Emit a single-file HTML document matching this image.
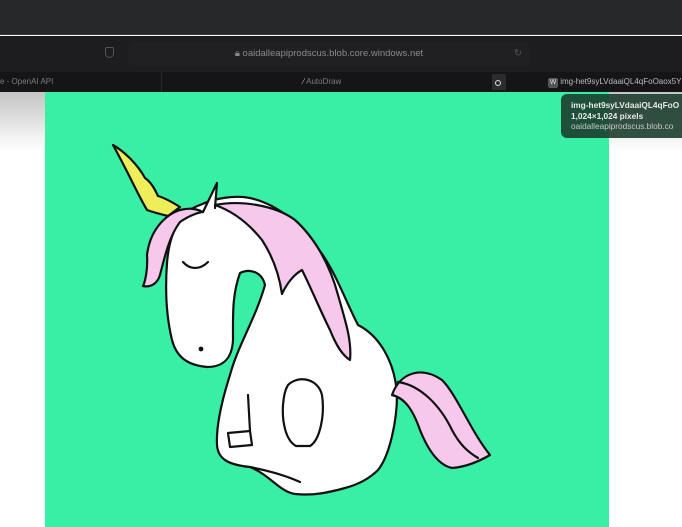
<!DOCTYPE html>
<html><head><style>
*{margin:0;padding:0;box-sizing:border-box}
body{width:682px;height:527px;overflow:hidden;background:#fff;font-family:"Liberation Sans",sans-serif;position:relative}
.top{position:absolute;left:0;top:0;width:682px;height:35px;background:#27282a;border-bottom:1px solid #3b3b3d}
.addr{position:absolute;left:0;top:36px;width:682px;height:36px;background:#1d1d1f}
.url{position:absolute;left:128px;top:42px;width:402px;height:24px;border-radius:6px;background:#202022;color:#8a8a8c;font-size:9.5px;text-align:center;line-height:24px}
.tabs{position:absolute;left:0;top:72px;width:682px;height:20px;background:#151517;font-size:8px;color:#7d7d80}
.tab{position:absolute;top:0;height:20px;line-height:20px}
.shade{position:absolute;left:0;top:92px;width:682px;height:435px;background:linear-gradient(#c4c4c4,#f2f2f2 45px,#fff 60px)}
.img{position:absolute;left:45px;top:92px;width:564px;height:435px;background:#39efa6}
.tip{position:absolute;left:561px;top:94px;width:130px;height:44px;border-radius:6px;background:rgba(28,62,46,.9);color:#e8e8e8;font-size:8.3px;line-height:10.5px;padding:6px 0 0 10px;white-space:nowrap;overflow:hidden}
</style></head><body>
<div class="top"></div>
<div class="addr"><div style="position:absolute;left:105px;top:11px;width:9px;height:11px;border:1.5px solid #555;border-radius:2px 2px 5px 5px"></div></div>
<div class="url">🔒︎ oaidalleapiprodscus.blob.core.windows.net<span style="position:absolute;right:8px;color:#555">↻</span></div>
<div class="tabs">
<div class="tab" style="left:0">e - OpenAI API</div>
<div style="position:absolute;left:161px;top:0;width:1px;height:20px;background:#2a2a2c"></div>
<div class="tab" style="left:303px"><span style="color:#c9a">⁄</span> AutoDraw</div>
<div style="position:absolute;left:492px;top:2px;width:14px;height:16px;background:#2c2c2e"></div>
<div style="position:absolute;left:495px;top:8px;width:6px;height:6px;border:1.5px solid #ddd;border-radius:50%"></div>
<div class="tab" style="left:548px;color:#bbb"><span style="display:inline-block;width:10px;height:10px;background:#555;border-radius:2px;font-size:7px;line-height:10px;text-align:center;color:#ddd">W</span> img-het9syLVdaaiQL4qFoOaox5Y</div>
</div>
<div class="shade"></div>
<div class="img">
<svg width="564" height="435" viewBox="45 92 564 435" style="position:absolute;left:0;top:0" fill="none" stroke="#111" stroke-width="2.2" stroke-linejoin="round" stroke-linecap="round">
<path d="M113,145 C125,152 138,165 145,178 C152,183 155,190 158,196 C165,198 172,202 180,207 L168,216 C160,214 152,212 147,210 C138,195 128,172 113,145Z" fill="#eeee5a"/>
<path d="M200,205 C185,210 170,225 167,263 C165,290 166,315 172,340 C176,355 185,365 207,367 C222,367 232,360 233,340 C233,315 232,295 240,273 C250,268 262,272 265,285 C255,320 238,345 230,375 C222,400 216,425 217,445 C218,460 230,465 250,467 C270,475 280,492 295,494 C315,496 330,492 345,488 C360,484 370,478 378,470 C390,455 397,420 397,395 C395,360 378,335 358,325 C345,300 335,270 317,247 C300,225 280,205 250,198 C235,195 215,198 200,205Z" fill="#fff"/>
<path d="M203,212 L217,183 L215,208" fill="#fff"/>
<path d="M180,210 C165,215 150,230 147,255 C148,270 145,282 143,286 C152,288 158,282 160,275 C165,255 170,235 180,222 C190,215 200,212 203,212 C195,208 188,208 180,210Z" fill="#f6c9ec"/>
<path d="M215,205 C240,200 275,205 295,220 C315,238 330,265 338,295 C345,320 352,340 350,360 C342,355 336,345 330,330 C320,310 312,290 302,270 C293,275 286,285 282,294 C280,280 275,260 262,240 C250,225 235,212 215,205Z" fill="#f6c9ec"/>
<path d="M392,395 C400,372 422,366 442,380 C457,395 470,430 490,455 C478,462 465,467 452,468 C438,465 428,450 420,430 C413,410 405,398 392,395Z" fill="#f6c9ec"/>
<path d="M398,382 C420,385 440,405 452,430 C460,445 468,452 478,458"/>
<path d="M183,262 C190,270 200,270 208,262"/>
<circle cx="201" cy="349" r="1.3" fill="#111"/>
<path d="M288,385 C298,375 318,378 322,395 C325,415 320,440 310,446 L296,446 C285,440 282,420 283,405 C284,395 285,390 288,385Z"/>
<path d="M228,433 L250,431 L252,445 L230,447Z"/>
<path d="M248,395 L250,431"/>
<path d="M250,467 C265,470 285,475 300,482"/>
</svg>
</div>
<div class="tip"><div style="font-weight:bold">img-het9syLVdaaiQL4qFoO</div><div style="font-weight:bold">1,024×1,024 pixels</div><div style="color:#c8c8c8">oaidalleapiprodscus.blob.co</div></div>
</body></html>
